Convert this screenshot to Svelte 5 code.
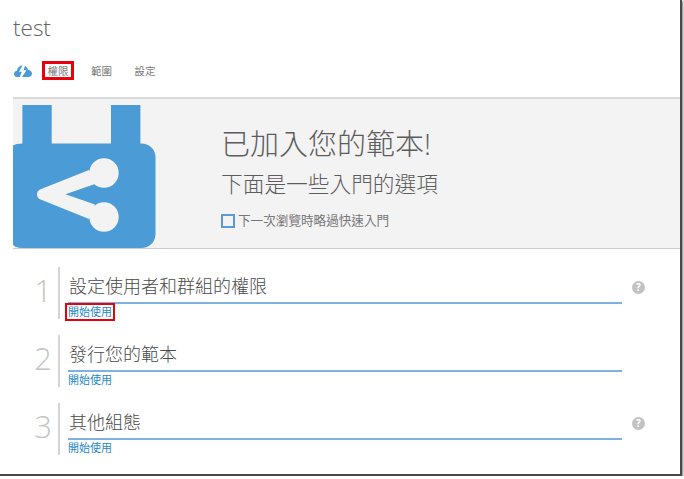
<script>
  const tabs = [
    { label: '權限', active: true },
    { label: '範圍', active: false },
    { label: '設定', active: false }
  ];

  const steps = [
    { n: 1, title: '設定使用者和群組的權限', help: true, marked: true },
    { n: 2, title: '發行您的範本', help: false, marked: false },
    { n: 3, title: '其他組態', help: true, marked: false }
  ];
</script>

<div class="shot">
  <header class="head">
    <h1 class="name">test</h1>
    <nav class="tabs">
      <svg class="cloud" viewBox="0 0 18 12" width="18" height="12">
        <path fill="#4b9cd6" d="M3 12 C0.800 12 0 10.500 0 9 C0 7.200 1.200 6 3 5.800 C3.400 2.500 5.800 0.500 8.800 0.500 C11.600 0.500 13.400 2.200 14 4.800 C16.400 5 18 6.600 18 8.600 C18 10.500 16.600 12 14.500 12 Z" />
        <path fill="#fff" d="M8.800 0 L5 6.800 H7.800 L5.800 12 H8 L12.500 5.200 H9.600 L11.200 0 Z" />
      </svg>
      {#each tabs as tab}
        <span class="tab" class:active={tab.active}>{tab.label}</span>
      {/each}
    </nav>
  </header>

  <section class="hero">
    <svg class="badge" viewBox="0 0 143 143" width="143" height="143">
      <path fill="#4b9cd6" d="M9.400 0 H38.700 V38.600 H98 V0 H127.400 V38.600 H128 C136.500 38.600 142.500 44.500 142.500 52 V129 C142.500 137 136.500 143 128 143 H10 C4 143 0 141 0 139 V40.500 C2 39.500 5 38.600 9.400 38.600 Z" />
      <g fill="#f3f3f3">
        <circle cx="91" cy="68" r="14.700" />
        <circle cx="91" cy="112" r="14.700" />
        <path d="M76 65 L27 84.500 C23 86.500 23 92.500 27 94.200 L76 114 L82 99.500 L52.400 89.300 L82 79 Z" />
      </g>
    </svg>
    <div class="hero-text">
      <h2>已加入您的範本!</h2>
      <h3>下面是一些入門的選項</h3>
      <div class="skip">
        <span class="box"></span>
        <span>下一次瀏覽時略過快速入門</span>
      </div>
    </div>
  </section>

  <section class="steps">
    {#each steps as step}
      <div class="step">
        <div class="num">{step.n}</div>
        <div class="body">
          <div class="title">{step.title}</div>
          <a class="start" class:marked={step.marked} href="#top">開始使用</a>
        </div>
        <div class="help-col">
          {#if step.help}
            <span class="help">?</span>
          {/if}
        </div>
      </div>
    {/each}
  </section>
</div>

<style>
  :global(body) {
    margin: 0;
    background: #fff;
  }

  .shot {
    box-sizing: border-box;
    width: 682px;
    height: 476px;
    background: #fff;
    border-right: 2px solid #4a4a4a;
    border-bottom: 2px solid #4a4a4a;
    box-shadow: 1px 1px 2px #777;
    font-family: "Open Sans", "Noto Sans CJK TC", sans-serif;
    overflow: hidden;
  }

  .head {
    height: 97px;
    padding-left: 13px;
  }

  .name {
    margin: 0;
    padding-top: 11px;
    height: 37px;
    font-size: 22.500px;
    line-height: 33px;
    font-weight: 300;
    color: #5f6468;
  }

  .tabs {
    display: flex;
    align-items: center;
    margin-top: 13px;
  }

  .cloud {
    margin-left: 1px;
    margin-right: 10px;
  }

  .tab {
    box-sizing: border-box;
    width: 32px;
    height: 19px;
    margin-right: 11.500px;
    text-align: center;
    font-size: 10.500px;
    line-height: 21px;
    color: #777;
  }

  .tab.active {
    border: 3px solid #e8000d;
    line-height: 15px;
  }

  .hero {
    display: flex;
    margin-left: 13px;
    height: 152px;
    box-sizing: border-box;
    background: #f3f3f3;
    border-top: 2px solid #d9d9d9;
    border-bottom: 1px solid #ccc;
    align-items: flex-end;
  }

  .badge {
    display: block;
    flex: none;
  }

  .hero-text {
    align-self: flex-start;
    margin-left: 65px;
    color: #5c5c5c;
  }

  .hero-text h2 {
    margin: 25px 0 0;
    font-size: 29px;
    line-height: 40px;
    font-weight: 300;
  }

  .hero-text h3 {
    margin: 5px 0 0;
    font-size: 21.700px;
    line-height: 30px;
    font-weight: 300;
  }

  .skip {
    display: flex;
    align-items: center;
    gap: 3px;
    margin-top: 13px;
    font-size: 12.600px;
    line-height: 18px;
    color: #777;
  }

  .box {
    box-sizing: border-box;
    width: 14px;
    height: 14px;
    border: 2px solid #5b9bd0;
  }

  .steps {
    display: flex;
    flex-direction: column;
    padding-top: 18px;
  }

  .step {
    display: flex;
    height: 68px;
  }

  .num {
    width: 36px;
    margin-left: 24px;
    padding-right: 6px;
    box-sizing: border-box;
    height: 52px;
    border-right: 2px solid #d4d4d4;
    text-align: right;
    font-size: 31px;
    line-height: 47px;
    font-weight: 300;
    color: #c4c4c4;
  }

  .body {
    width: 554px;
    margin-left: 8px;
  }

  .title {
    height: 37px;
    box-sizing: border-box;
    padding: 5px 0 0 1px;
    border-bottom: 2px solid #7fb2e0;
    font-size: 18px;
    line-height: 28px;
    font-weight: 300;
    color: #4a4a4a;
  }

  .start {
    display: block;
    width: fit-content;
    margin-top: 2px;
    font-size: 11px;
    line-height: 12px;
    color: #1f87c6;
    text-decoration: none;
  }

  .start.marked {
    outline: 2.500px solid #e8000d;
    outline-offset: 1.500px;
  }

  .help-col {
    width: 23px;
    display: flex;
    justify-content: flex-end;
    padding-top: 14px;
    height: 14px;
  }

  .help {
    width: 13px;
    height: 13px;
    border-radius: 50%;
    background: #c2c2c2;
    color: #fff;
    font-size: 10px;
    font-weight: 700;
    line-height: 13px;
    text-align: center;
  }
</style>
